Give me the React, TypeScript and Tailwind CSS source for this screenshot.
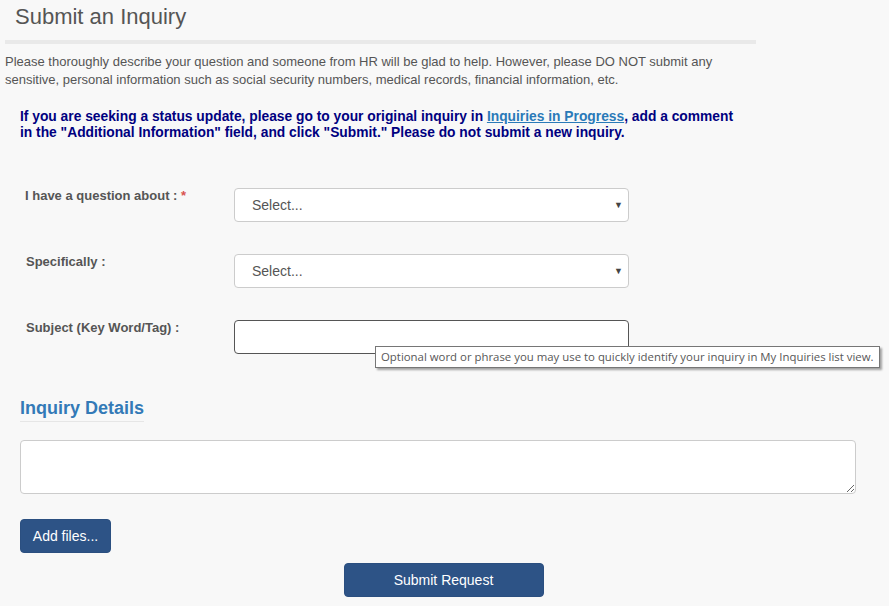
import React from "react";

function Caret() {
  return <span className="absolute right-[5px] top-[12px] text-[9px] leading-none text-[#444]">▼</span>;
}

function SelectBox() {
  return (
    <div className="relative h-[34px] w-[395px] rounded-[4px] border border-[#ccc] bg-white pl-[17px] text-[14px] leading-[32px] text-[#555]">
      Select...
      <Caret />
    </div>
  );
}

export default function App() {
  return (
    <div className="min-h-[606px] w-full bg-[#f8f8f8] font-['Liberation_Sans',Arial,sans-serif] text-[#555]">
      {/* heading */}
      <div className="ml-[5px] w-[751px] border-b-[4px] border-[#e9e9e9] pl-[10px] pt-[3px] pb-[9px]">
        <h1 className="text-[22px] leading-[28px] text-[#555]">Submit an Inquiry</h1>
      </div>

      <p className="mt-[9px] w-[740px] pl-[5px] text-[13px] leading-[18px] text-[#555]">
        Please thoroughly describe your question and someone from HR will be glad to help. However, please DO NOT submit
        any sensitive, personal information such as social security numbers, medical records, financial information, etc.
      </p>

      <p className="mt-[20px] w-[745px] pl-[20px] text-[13.8px] font-bold leading-[15.5px] text-[#000080]">
        If you are seeking a status update, please go to your original inquiry in{" "}
        <a className="text-[#2a7ab8] underline">Inquiries in Progress</a>, add a comment in the "Additional Information"
        field, and click "Submit." Please do not submit a new inquiry.
      </p>

      {/* form rows */}
      <div className="mt-[48px] flex flex-col gap-[32px]">
        <div className="flex">
          <label className="w-[234px] shrink-0 pl-[25px] pt-[1px] text-[13px] font-bold leading-[14px] text-[#555]">
            I have a question about : <span className="text-[#d9534f]">*</span>
          </label>
          <SelectBox />
        </div>
        <div className="flex">
          <label className="w-[234px] shrink-0 pl-[26px] pt-[1px] text-[13px] font-bold leading-[14px] text-[#555]">
            Specifically :
          </label>
          <SelectBox />
        </div>
        <div className="flex">
          <label className="w-[234px] shrink-0 pl-[26px] pt-[1px] text-[13px] font-bold leading-[14px] text-[#555]">
            Subject (Key Word/Tag) :
          </label>
          <div className="relative">
            <div className="h-[34px] w-[395px] rounded-[4px] border border-[#555] bg-white" />
            <div className="absolute left-[141px] top-[26px] h-[22px] w-[505px] border border-[#767676] bg-white pl-[5px] font-['Open_Sans',sans-serif] text-[11.4px] leading-[19px] text-[#575757] shadow-[2px_2px_2px_rgba(0,0,0,0.35)] whitespace-nowrap">
              Optional word or phrase you may use to quickly identify your inquiry in My Inquiries list view.
            </div>
          </div>
        </div>
      </div>

      {/* inquiry details */}
      <div className="mt-[43px] pl-[20px]">
        <h2 className="inline-block border-b border-[#e6e6e6] pb-[2px] text-[18px] font-bold leading-[22px] text-[#337ab7]">
          Inquiry Details
        </h2>
      </div>

      <div className="mt-[18px] pl-[20px]">
        <textarea className="block h-[54px] w-[836px] rounded-[4px] border border-[#ccc] bg-white" />
      </div>

      <div className="mt-[25px] pl-[20px]">
        <button className="h-[34px] w-[91px] rounded-[4px] border border-[#2b4f80] bg-[#2d5386] text-[14px] text-white">
          Add files...
        </button>
      </div>

      <div className="mt-[10px] flex justify-center pb-[10px]">
        <button className="-ml-[2px] h-[34px] w-[200px] rounded-[4px] border border-[#2b4f80] bg-[#2d5386] text-[14px] text-white">
          Submit Request
        </button>
      </div>
    </div>
  );
}
